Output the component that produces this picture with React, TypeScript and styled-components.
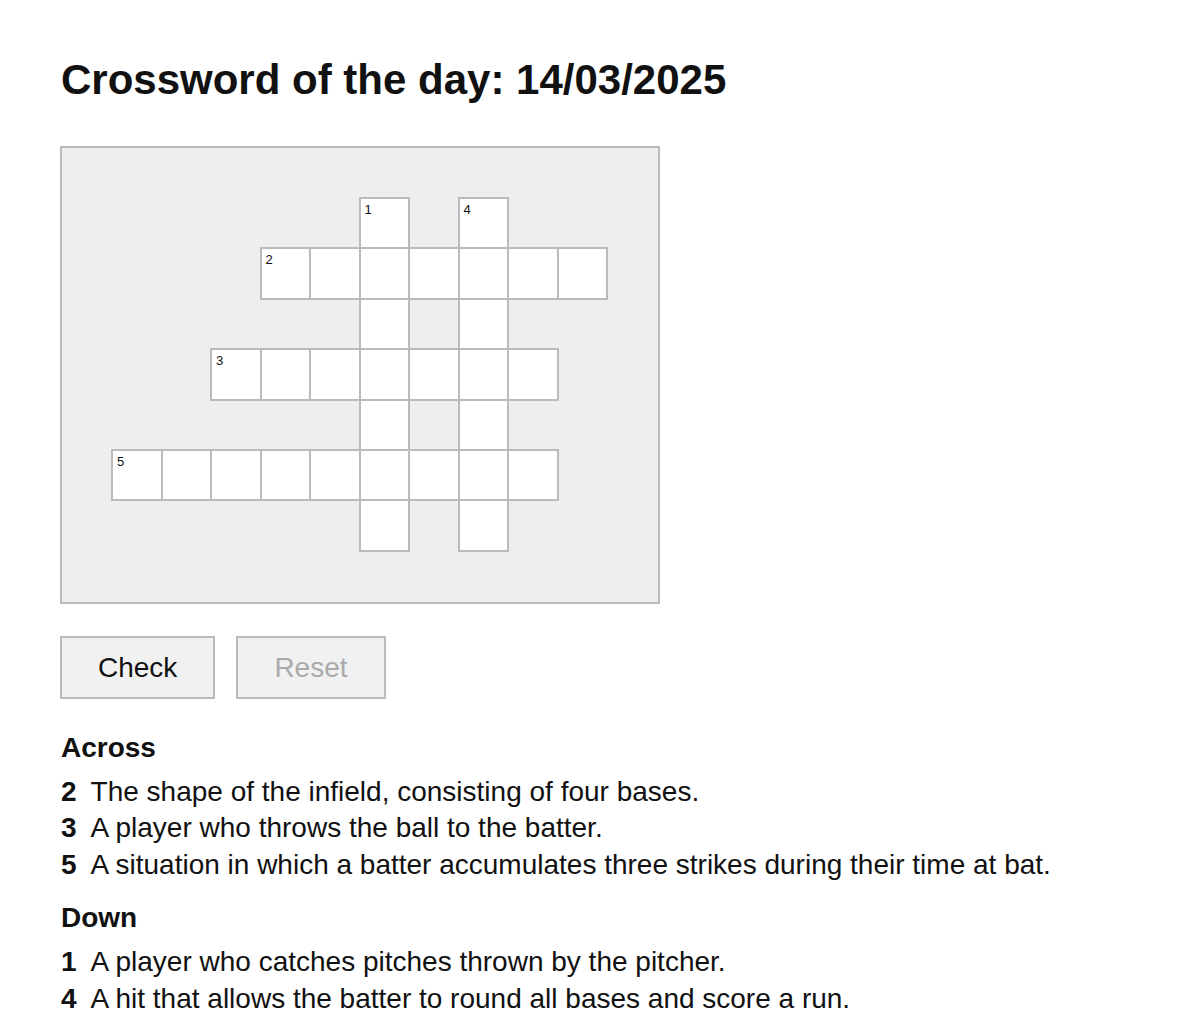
import React, { useState } from 'react';
import styled, { createGlobalStyle } from 'styled-components';

type Clue = { num: number; text: string };

const ROWS = 7;
const COLS = 10;

// [row, col, number?] for every white square
const cells: [number, number, number?][] = [
  [0, 5, 1],
  [0, 7, 4],
  [1, 3, 2], [1, 4], [1, 5], [1, 6], [1, 7], [1, 8], [1, 9],
  [2, 5],
  [2, 7],
  [3, 2, 3], [3, 3], [3, 4], [3, 5], [3, 6], [3, 7], [3, 8],
  [4, 5],
  [4, 7],
  [5, 0, 5], [5, 1], [5, 2], [5, 3], [5, 4], [5, 5], [5, 6], [5, 7], [5, 8],
  [6, 5],
  [6, 7],
];

const across: Clue[] = [
  { num: 2, text: 'The shape of the infield, consisting of four bases.' },
  { num: 3, text: 'A player who throws the ball to the batter.' },
  { num: 5, text: 'A situation in which a batter accumulates three strikes during their time at bat.' },
];

const down: Clue[] = [
  { num: 1, text: 'A player who catches pitches thrown by the pitcher.' },
  { num: 4, text: 'A hit that allows the batter to round all bases and score a run.' },
];

function App() {
  const [letters, setLetters] = useState<Record<string, string>>({});
  const touched = Object.values(letters).some((v) => v !== '');

  const updateLetter = (key: string, value: string) => {
    setLetters({ ...letters, [key]: value.slice(-1).toUpperCase() });
  };

  return (
    <Wrapper>
      <GlobalStyle />
      <Title>Crossword of the day: 14/03/2025</Title>
      <Board>
        <Grid>
          {cells.map(([row, col, num]) => {
            const key = `${row}-${col}`;
            return (
              <Cell key={key} $row={row} $col={col}>
                {num && <CellNumber>{num}</CellNumber>}
                <CellInput value={letters[key] || ''} onChange={(e) => updateLetter(key, e.target.value)} />
              </Cell>
            );
          })}
        </Grid>
      </Board>
      <Buttons>
        <Button>Check</Button>
        <Button disabled={!touched} onClick={() => setLetters({})}>
          Reset
        </Button>
      </Buttons>
      <Section>
        <SectionTitle>Across</SectionTitle>
        <ClueList>
          {across.map((item) => (
            <ClueRow key={item.num}>
              <ClueNumber>{item.num}</ClueNumber>
              <span>{item.text}</span>
            </ClueRow>
          ))}
        </ClueList>
      </Section>
      <Section $gap={17}>
        <SectionTitle>Down</SectionTitle>
        <ClueList>
          {down.map((item) => (
            <ClueRow key={item.num}>
              <ClueNumber>{item.num}</ClueNumber>
              <span>{item.text}</span>
            </ClueRow>
          ))}
        </ClueList>
      </Section>
    </Wrapper>
  );
}

const GlobalStyle = createGlobalStyle`
  body {
    margin: 0;
    background: #fff;
    color: #111;
    font-family: 'Liberation Sans', Arial, Helvetica, sans-serif;
  }
`;

const Wrapper = styled.div`
  padding: 56px 60px 0;
`;

const Title = styled.h1`
  margin: 0 0 42px;
  padding-left: 1px;
  font-size: 42px;
  line-height: 48px;
  font-weight: 700;
`;

const Board = styled.div`
  box-sizing: border-box;
  width: 600px;
  padding: 50px 51px 51px 50px;
  border: 2px solid #bbb;
  background-color: #eee;
`;

const Grid = styled.div`
  display: grid;
  grid-template-columns: repeat(${COLS}, 49.5px);
  grid-template-rows: repeat(${ROWS}, 50.4px);
`;

const Cell = styled.div<{ $row: number; $col: number }>`
  position: relative;
  grid-row: ${({ $row }) => $row + 1};
  grid-column: ${({ $col }) => $col + 1};
  margin: -1px;
  border: 2px solid #bbb;
  background-color: #fff;
`;

const CellNumber = styled.span`
  position: absolute;
  top: 3px;
  left: 4px;
  font-size: 13px;
  line-height: 15px;
  color: #111;
  pointer-events: none;
`;

const CellInput = styled.input`
  box-sizing: border-box;
  width: 100%;
  height: 100%;
  padding: 6px 0 0;
  border: 0;
  outline: none;
  background: transparent;
  text-align: center;
  font-family: inherit;
  font-size: 24px;
  color: #111;
`;

const Buttons = styled.div`
  display: flex;
  gap: 21px;
  margin-top: 32px;
`;

const Button = styled.button`
  padding: 14px 36px;
  border: 2px solid #bbb;
  border-radius: 0;
  background-color: #f1f1f1;
  font-family: inherit;
  font-size: 28px;
  line-height: 31px;
  color: #111;
  cursor: pointer;

  &:disabled {
    color: #aaa;
    cursor: default;
  }
`;

const Section = styled.section<{ $gap?: number }>`
  margin-top: ${({ $gap }) => $gap ?? 31}px;
`;

const SectionTitle = styled.h2`
  margin: 0 0 8px;
  padding-left: 1px;
  font-size: 28px;
  line-height: 36px;
  font-weight: 700;
`;

const ClueList = styled.div`
  display: flex;
  flex-direction: column;
`;

const ClueRow = styled.div`
  display: flex;
  gap: 14px;
  padding-left: 1px;
  font-size: 28px;
  line-height: 36.5px;
`;

const ClueNumber = styled.b`
  font-weight: 700;
`;

export default App;
